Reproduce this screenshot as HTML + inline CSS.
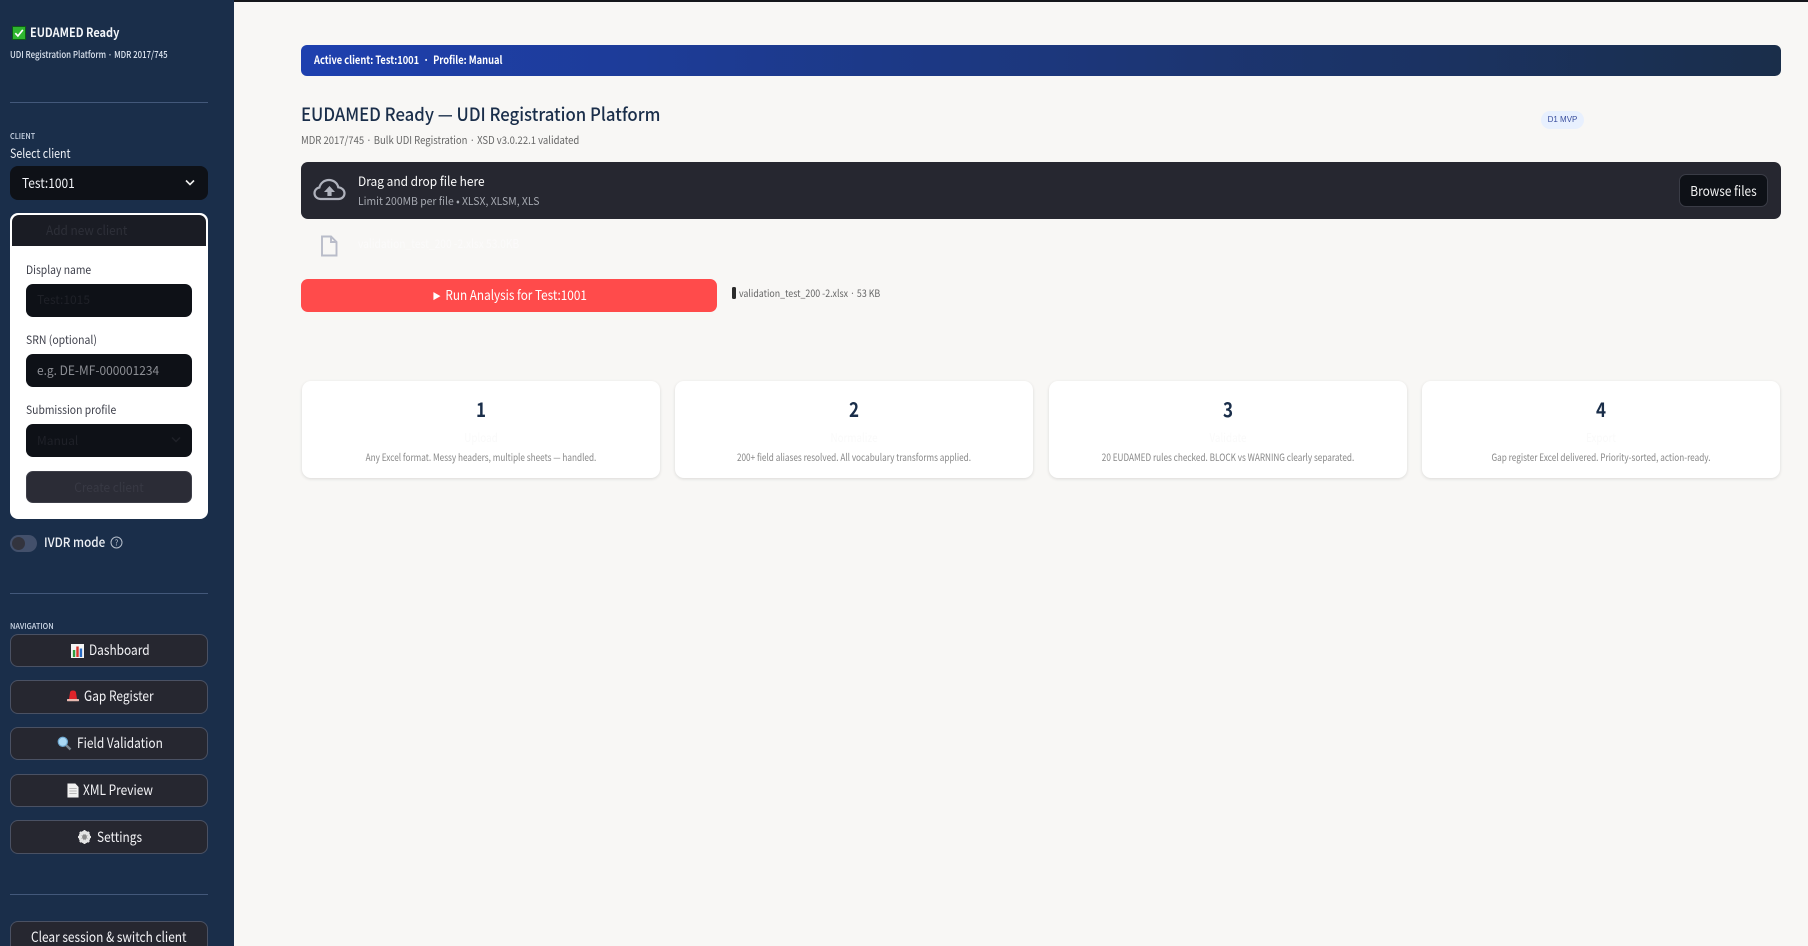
<!DOCTYPE html>
<html><head><meta charset="utf-8"><title>EUDAMED Ready</title>
<style>
*{box-sizing:border-box}
html,body{margin:0;padding:0;width:1808px;height:946px;overflow:hidden;background:#f8f7f5;font-family:"Noto Sans CJK JP","Liberation Sans",sans-serif}
.a{position:absolute}
.t{position:absolute;white-space:nowrap;line-height:20px;height:20px;transform-origin:0 50%}
.c{text-align:center;transform-origin:50% 50%}
.div{position:absolute;left:10px;width:198px;height:1px;background:#43587a}
.nav{position:absolute;left:10px;width:198px;background:#262730;border:1px solid #4a5163;border-radius:8px}
.nt{color:#f2f2f5;font-size:14px;transform:scaleX(.85)}
.inp{position:absolute;left:26px;width:166px;height:33px;background:#0e1117;border-radius:7px}
.card{position:absolute;top:381px;height:97px;width:358px;background:#fff;border-radius:9px;box-shadow:0 1px 3px rgba(0,0,0,.12)}
.card .n{position:absolute;left:0;right:0;top:13px;text-align:center;font-size:20px;line-height:30px;font-weight:700;color:#1a2e4a;transform:scaleX(.85)}
.card .h{position:absolute;left:0;right:0;top:47px;text-align:center;font-size:12px;line-height:20px;color:#fafafa;transform:scaleX(.82)}
.card .d{position:absolute;left:0;right:0;top:66px;text-align:center;font-size:10px;line-height:20px;color:#888;transform:scaleX(.82)}
</style></head><body>
<div class="a" style="left:234px;top:0;width:1574px;height:2px;background:#15171c"></div>
<div class="a" style="left:0;top:0;width:234px;height:946px;background:#1a2e4a;overflow:hidden">
 <svg class="a" style="left:12px;top:26px" width="14" height="14" viewBox="0 0 14 14"><rect width="14" height="14" fill="#0d5c16"/><rect x="1" y="1" width="12" height="12" fill="#2fb52f"/><path d="M3.3 7.2 5.9 10 10.8 3.9" fill="none" stroke="#fff" stroke-width="1.7"/></svg>
 <div class="t" style="left:30px;top:22px;font-size:12.5px;font-weight:600;color:#f2f5f9;transform:scaleX(.876)">EUDAMED Ready</div>
 <div class="t" style="left:10px;top:44px;font-size:9.5px;font-weight:500;color:#dce4ef;transform:scaleX(.83)">UDI Registration Platform · MDR 2017/745</div>
 <div class="div" style="top:102px"></div>
 <div class="t" style="left:10px;top:127px;font-size:8px;font-weight:500;color:#cfd9e8;transform:scaleX(.91)">CLIENT</div>
 <div class="t" style="left:10px;top:143px;font-size:12.5px;color:#eef1f6;transform:scaleX(.85)">Select client</div>
 <div class="a" style="left:10px;top:166px;width:198px;height:34px;background:#0e1117;border-radius:8px"></div>
 <div class="t" style="left:22px;top:172px;font-size:13.5px;color:#f0f2f6;transform:scaleX(.885)">Test:1001</div>
 <svg class="a" style="left:184px;top:178px" width="12" height="10" viewBox="0 0 12 10"><path d="M2 2.5 6 6.5 10 2.5" fill="none" stroke="#eee" stroke-width="1.6"/></svg>
 <div class="a" style="left:10px;top:213px;width:198px;height:306px;background:#fff;border-radius:8px"></div>
 <div class="a" style="left:12px;top:215px;width:194px;height:31px;background:#1a1c24;border-radius:7px 7px 0 0"></div>
 <div class="t" style="left:46px;top:220px;font-size:13px;color:#2d2f38;transform:scaleX(.91)">Add new client</div>
 <div class="t" style="left:26px;top:260px;font-size:11.5px;color:#3d3f4a;transform:scaleX(.9)">Display name</div>
 <div class="inp" style="top:284px"></div>
 <div class="t" style="left:37px;top:290px;font-size:12px;color:#1f2128">Test:1015</div>
 <div class="t" style="left:26px;top:330px;font-size:11.5px;color:#3d3f4a;transform:scaleX(.91)">SRN (optional)</div>
 <div class="inp" style="top:354px"></div>
 <div class="t" style="left:37px;top:360px;font-size:12.5px;color:#8c8e94;transform:scaleX(.955)">e.g. DE-MF-000001234</div>
 <div class="t" style="left:26px;top:400px;font-size:11.5px;color:#3d3f4a;transform:scaleX(.9)">Submission profile</div>
 <div class="inp" style="top:424px"></div>
 <div class="t" style="left:37px;top:431px;font-size:12px;color:#1f2128">Manual</div>
 <svg class="a" style="left:170px;top:435px" width="12" height="10" viewBox="0 0 12 10"><path d="M2 2.5 6 6.5 10 2.5" fill="none" stroke="#1f2128" stroke-width="1.5"/></svg>
 <div class="a" style="left:26px;top:471px;width:166px;height:32px;background:#2b2c36;border:1px solid #3d3e48;border-radius:7px"></div>
 <div class="t c" style="left:26px;width:166px;top:477px;font-size:12.5px;color:#383944;transform:scaleX(.95)">Create client</div>
 <div class="a" style="left:10px;top:535px;width:27px;height:17px;background:#43506b;border-radius:9px"></div>
 <div class="a" style="left:12px;top:537px;width:13px;height:13px;background:#33343e;border-radius:50%"></div>
 <div class="t" style="left:44px;top:532px;font-size:13px;font-weight:500;color:#eef1f6;transform:scaleX(.9)">IVDR mode</div>
 <svg class="a" style="left:110px;top:536px" width="13" height="13" viewBox="0 0 13 13"><circle cx="6.5" cy="6.5" r="5.5" fill="none" stroke="#b6bfcc" stroke-width="1"/><text x="6.5" y="9.5" text-anchor="middle" font-size="8" fill="#b6bfcc" font-family="Noto Sans CJK JP,sans-serif">?</text></svg>
 <div class="div" style="top:593px"></div>
 <div class="t" style="left:10px;top:617px;font-size:8px;font-weight:500;color:#cfd9e8;transform:scaleX(.925)">NAVIGATION</div>

 <div class="nav" style="top:634px;height:33px"></div>
 <svg class="a" style="left:71px;top:644px" width="13" height="14" viewBox="0 0 14 14" preserveAspectRatio="none"><rect width="14" height="14" fill="#f4f4f4"/><rect x="2" y="6" width="2.6" height="7" fill="#2c9c3c"/><rect x="5.7" y="2.5" width="2.6" height="10.5" fill="#d9342b"/><rect x="9.4" y="4.5" width="2.6" height="8.5" fill="#2a6cc4"/></svg>
 <div class="t nt" style="left:89px;top:640px">Dashboard</div>

 <div class="nav" style="top:680px;height:34px"></div>
 <svg class="a" style="left:66px;top:689px" width="14" height="14" viewBox="0 0 14 14"><path d="M3 10 4 3.5Q4.3 1.5 7 1.5T10 3.5L11 10Z" fill="#e0242a"/><rect x="1" y="10" width="12" height="2.2" rx=".6" fill="#e8b9b0"/></svg>
 <div class="t nt" style="left:84px;top:686px">Gap Register</div>

 <div class="nav" style="top:727px;height:33px"></div>
 <svg class="a" style="left:57px;top:736px" width="15" height="15" viewBox="0 0 15 15"><path d="M9 9 13.5 13.5" stroke="#7a8590" stroke-width="2.4"/><circle cx="5.8" cy="5.8" r="4.6" fill="#a9d8f5" stroke="#6fa8d0" stroke-width="1.2"/></svg>
 <div class="t nt" style="left:77px;top:733px">Field Validation</div>

 <div class="nav" style="top:774px;height:33px"></div>
 <svg class="a" style="left:67px;top:783px" width="12" height="15" viewBox="0 0 13 15" preserveAspectRatio="none"><path d="M.5.5H9L12.5 4V14.5H.5Z" fill="#f1f1f1"/><path d="M2.5 5.5H10.5M2.5 8H10.5M2.5 10.5H10.5" stroke="#b9b9b9" stroke-width="1"/></svg>
 <div class="t nt" style="left:83px;top:780px">XML Preview</div>

 <div class="nav" style="top:820px;height:34px"></div>
 <svg class="a" style="left:78px;top:830px" width="13" height="14" viewBox="0 0 14 14" preserveAspectRatio="none"><circle cx="7" cy="7" r="4.8" fill="none" stroke="#e4e4e4" stroke-width="3"/><path d="M7 0V14M0 7H14M2 2 12 12M12 2 2 12" stroke="#e4e4e4" stroke-width="2"/><circle cx="7" cy="7" r="2.6" fill="#8a8a8a"/></svg>
 <div class="t nt" style="left:97px;top:827px">Settings</div>

 <div class="div" style="top:894px"></div>
 <div class="nav" style="top:921px;height:34px"></div>
 <div class="t nt" style="left:31px;top:927px">Clear session &amp; switch client</div>
</div>

<div class="a" style="left:301px;top:45px;width:1480px;height:31px;border-radius:6px;background:linear-gradient(90deg,#1e40af,#1a2e4a)"></div>
<div class="t" style="left:314px;top:50px;font-size:11px;font-weight:600;color:#fff;white-space:pre;transform:scaleX(.845)">Active client: Test:1001  ·  Profile: Manual</div>
<div class="t" style="left:301px;top:104px;font-size:18px;font-weight:500;color:#1a2e4a;transform:scaleX(.93)">EUDAMED Ready — UDI Registration Platform</div>
<div class="t" style="left:301px;top:131px;font-size:10.5px;color:#666;transform:scaleX(.906)">MDR 2017/745 · Bulk UDI Registration · XSD v3.0.22.1 validated</div>
<div class="a" style="left:1541px;top:111px;width:43px;height:18px;border-radius:9px;background:#e8f0fe"></div>
<div class="t c" style="left:1541px;width:43px;top:110px;font-size:8px;font-family:'Liberation Sans',sans-serif;color:#3b4f9e">D1 MVP</div>

<div class="a" style="left:301px;top:162px;width:1480px;height:57px;background:#262730;border-radius:7px"></div>
<svg class="a" style="left:313px;top:178px" width="33" height="24" viewBox="0 0 33 24"><path d="M9 21H7.5C4 21 1.5 18.3 1.5 15.2 1.5 12.3 3.6 10 6.4 9.5 7.5 5 11.2 2 16 2 20.6 2 24.3 5 25.3 9.3 28.7 9.6 31.5 12 31.5 15.3 31.5 18.5 29 21 25.5 21Z" fill="none" stroke="#b0b3bd" stroke-width="2.2"/><path d="M16.5 8 22 14H18.6V18H14.4V14H11Z" fill="#b0b3bd"/></svg>
<div class="t" style="left:358px;top:171px;font-size:13px;color:#fafafa;transform:scaleX(.917)">Drag and drop file here</div>
<div class="t" style="left:358px;top:191px;font-size:11px;color:#a5a8b0;transform:scaleX(.946)">Limit 200MB per file • XLSX, XLSM, XLS</div>
<div class="a" style="left:1679px;top:174px;width:89px;height:33px;background:#0e1117;border:1px solid #3a3c46;border-radius:7px"></div>
<div class="t c" style="left:1679px;width:89px;top:180px;font-size:13.5px;color:#f2f2f2;transform:scaleX(.88)">Browse files</div>

<svg class="a" style="left:320px;top:235px" width="18" height="22" viewBox="0 0 18 22"><path d="M2 1.5H11L16.5 7V20.5H2Z M11 1.5V7H16.5" fill="none" stroke="#b9bcc9" stroke-width="1.9"/></svg>
<div class="t" style="left:358px;top:234px;font-size:12px;color:#fbfafa;transform:scaleX(.85)">validation_test_200 -2.xlsx  53.0KB</div>

<div class="a" style="left:301px;top:279px;width:416px;height:33px;background:#ff4b4b;border-radius:7px"></div>
<div class="t c" style="left:301px;width:416px;top:284px;font-size:13.5px;color:#fff;transform:scaleX(.87)">► Run Analysis for Test:1001</div>
<div class="a" style="left:732px;top:287px;width:4px;height:12px;background:#2b2b2b;border-radius:1.5px"></div>
<div class="t" style="left:739px;top:283px;font-size:10px;color:#666;transform:scaleX(.884)">validation_test_200 -2.xlsx · 53 KB</div>

<div class="card" style="left:302px"><div class="n">1</div><div class="h">Upload</div><div class="d">Any Excel format. Messy headers, multiple sheets — handled.</div></div>
<div class="card" style="left:675px"><div class="n">2</div><div class="h">Normalize</div><div class="d">200+ field aliases resolved. All vocabulary transforms applied.</div></div>
<div class="card" style="left:1049px"><div class="n">3</div><div class="h">Validate</div><div class="d">20 EUDAMED rules checked. BLOCK vs WARNING clearly separated.</div></div>
<div class="card" style="left:1422px"><div class="n">4</div><div class="h">Export</div><div class="d">Gap register Excel delivered. Priority-sorted, action-ready.</div></div>
</body></html>
